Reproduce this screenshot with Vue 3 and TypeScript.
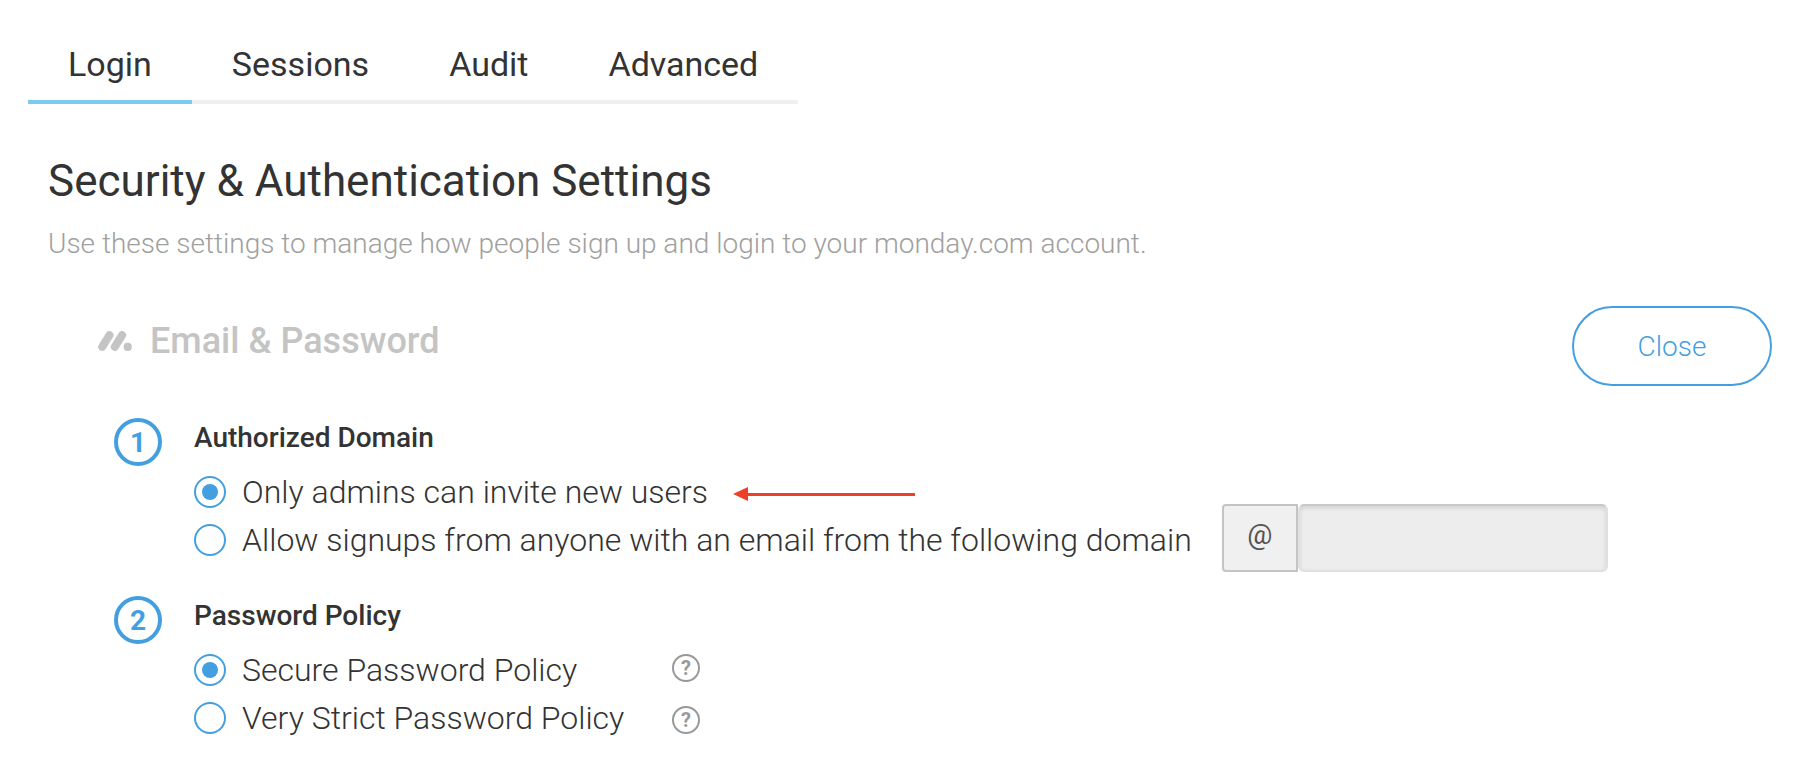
<script setup lang="ts">
import { ref } from 'vue'

const tabs = ['Login', 'Sessions', 'Audit', 'Advanced']
const policies = [
  { value: 'secure', label: 'Secure Password Policy' },
  { value: 'strict', label: 'Very Strict Password Policy' },
]
const activeTab = ref('Login')
const signup = ref('admins')
const policy = ref('secure')
const domain = ref('')
</script>

<template>
  <main class="page">
    <nav class="tabs">
      <button v-for="t in tabs" :key="t" type="button" class="tab" :class="{ active: t === activeTab }" @click="activeTab = t">{{ t }}</button>
    </nav>
    <header class="intro">
      <h1>Security &amp; Authentication Settings</h1>
      <p>Use these settings to manage how people sign up and login to your monday.com account.</p>
    </header>
    <div class="provider">
      <div class="title">
        <svg class="logo" width="34" height="20" viewBox="0 0 34 20" aria-hidden="true">
          <path d="M4.2 15.800 11.500 4.200M16.800 15.800 24.100 4.200" fill="none" stroke="#c4c4c4" stroke-width="8" stroke-linecap="round" />
          <circle cx="29.700" cy="15.900" r="4.100" fill="#c4c4c4" />
        </svg>
        <h2>Email &amp; Password</h2>
      </div>
      <button type="button" class="close">Close</button>
    </div>
    <section class="step">
      <span class="num">1</span>
      <div class="body">
        <h3>Authorized Domain</h3>
        <div class="row">
          <label><input v-model="signup" type="radio" name="signup" value="admins" />Only admins can invite new users</label>
          <svg class="arrow" width="182" height="16" viewBox="0 0 182 16" aria-hidden="true">
            <path d="M12 8.500H182" stroke="#ec4128" stroke-width="3" />
            <path d="M0 8 15 1V15Z" fill="#ec4128" />
          </svg>
        </div>
        <div class="row">
          <label><input v-model="signup" type="radio" name="signup" value="domain" />Allow signups from anyone with an email from the following domain</label>
          <div class="domain">
            <label for="domain" class="at">@</label>
            <input id="domain" v-model="domain" type="text" :disabled="signup === 'admins'" />
          </div>
        </div>
      </div>
    </section>
    <section class="step">
      <span class="num">2</span>
      <div class="body">
        <h3>Password Policy</h3>
        <div class="policies">
          <div>
            <div v-for="p in policies" :key="p.value" class="row">
              <label><input v-model="policy" type="radio" name="policy" :value="p.value" />{{ p.label }}</label>
            </div>
          </div>
          <div class="helps">
            <button v-for="p in policies" :key="p.value" type="button" class="help" :aria-label="p.label">?</button>
          </div>
        </div>
      </div>
    </section>
  </main>
</template>

<style>
body { background: #fff; }
</style>

<style scoped>
* { box-sizing: border-box; }
.page { padding: 28px 26px 16px 28px; font-family: Roboto, sans-serif; color: #333; }
button { font-family: inherit; cursor: pointer; }
h1, h2, h3, p { margin: 0; font-weight: 400; }
.tabs { display: flex; width: fit-content; }
.tab { height: 76px; padding: 0 40px; border: 0; border-bottom: 4px solid #f0f0f0; background: none; color: #333; font-size: 34px; }
.tab.active { border-color: #7ccaf0; }
.intro { padding: 48px 20px 0; }
h1 { font-size: 44px; line-height: 58px; }
.intro p { margin-top: 18px; color: #a0a0a0; font-size: 28px; font-weight: 300; line-height: 32px; }
.provider { display: flex; align-items: center; margin-top: 46px; padding-left: 70px; }
.title { display: flex; align-items: center; gap: 18px; padding-bottom: 10px; }
h2 { color: #c4c4c4; font-size: 36px; font-weight: 500; line-height: 40px; }
.close { width: 200px; height: 80px; margin-left: auto; border: 2px solid #439fe0; border-radius: 40px; background: #fff; color: #439fe0; font-size: 28px; font-weight: 300; }
.step { display: flex; gap: 32px; min-height: 178px; padding-left: 86px; }
.provider + .step { margin-top: 32px; }
.num { display: flex; align-items: center; justify-content: center; width: 48px; height: 48px; border: 4px solid #439fe0; border-radius: 50%; color: #439fe0; font-size: 28px; font-weight: 700; }
.body { flex: 1; }
h3 { margin-bottom: 10px; font-size: 28px; font-weight: 500; line-height: 40px; }
.row { display: flex; align-items: center; height: 48px; }
.row > label { display: flex; align-items: center; gap: 16px; font-size: 32px; font-weight: 300; line-height: 48px; white-space: nowrap; }
input[type='radio'] { appearance: none; width: 32px; height: 32px; margin: 0; padding: 6px; border: 2px solid #439fe0; border-radius: 50%; }
input[type='radio']:checked { background: #439fe0 content-box; }
.arrow { margin: 4px 0 0 25px; }
.domain { display: flex; height: 68px; margin: 0 0 4px 30px; }
.at { width: 76px; border: 2px solid #c4c4c4; border-radius: 4px 0 0 4px; background: #f0f0f0; color: #555; font-size: 28px; line-height: 58px; text-align: center; }
.domain input { width: 310px; padding: 0 16px; border: 2px solid #e0e0e0; border-top-color: #c8c8c8; border-radius: 6px; background: #ededed; box-shadow: inset 0 2px 4px rgb(0 0 0 / 12%); color: #333; font: inherit; font-size: 28px; }
.policies { display: flex; }
.policies > :first-child { width: 478px; }
.helps { display: flex; flex-direction: column; gap: 24px; padding-top: 8px; }
.help { width: 28px; height: 28px; padding: 0; border: 2px solid #999; border-radius: 50%; background: none; color: #999; font-size: 20px; font-weight: 700; line-height: 24px; }
</style>
